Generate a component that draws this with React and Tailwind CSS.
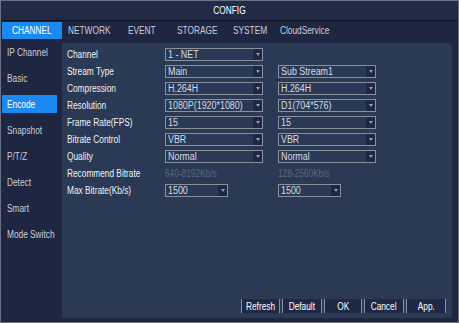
import React from 'react';

const tabs = [
  ['CHANNEL', 'ml-px w-[60px] justify-center bg-[#1a8af2] text-white'],
  ['NETWORK', 'ml-[6px] w-[60px]'],
  ['EVENT', 'w-[49px]'],
  ['STORAGE', 'w-[56px]'],
  ['SYSTEM', 'w-[47px]'],
  ['CloudService', 'w-[70px]'],
];
const menu = ['IP Channel', 'Basic', 'Encode', 'Snapshot', 'P/T/Z', 'Detect', 'Smart', 'Mode Switch'];

const rows = [
  { label: 'Channel', a: '1 - NET' },
  { label: 'Stream Type', a: 'Main', b: 'Sub Stream1' },
  { label: 'Compression', a: 'H.264H', b: 'H.264H' },
  { label: 'Resolution', a: '1080P(1920*1080)', b: 'D1(704*576)' },
  { label: 'Frame Rate(FPS)', a: '15', b: '15' },
  { label: 'Bitrate Control', a: 'VBR', b: 'VBR' },
  { label: 'Quality', a: 'Normal', b: 'Normal' },
];

// the device UI uses a narrow face; squeeze Liberation Sans to match
function Narrow({ children, center }) {
  return (
    <span
      className={`inline-block whitespace-nowrap scale-x-[0.83] ${center ? 'origin-center' : 'origin-left'}`}
    >
      {children}
    </span>
  );
}

function Select({ value, narrow }) {
  return (
    <div
      className={`flex h-[13px] items-stretch border border-[#8b919c] bg-[#2a3a56] ${
        narrow ? 'w-[63px]' : 'w-[98px]'
      }`}
    >
      <span className="flex-1 overflow-hidden whitespace-nowrap pl-[2px] text-[10px] leading-[11px] text-[#d6dae2]">
        <span className="inline-block origin-left scale-x-[0.89]">{value}</span>
      </span>
      <span className="flex w-[9px] items-center justify-center bg-[#1e2844]">
        <span className="h-0 w-0 border-x-[2px] border-t-[3px] border-x-transparent border-t-[#8fa0bd]" />
      </span>
    </div>
  );
}

export default function App() {
  return (
    <div
      className="flex h-[323px] w-[459px] flex-col border border-[#6b7184] bg-[#1f2642] text-[#dfe3ea]"
      style={{ fontFamily: '"Liberation Sans", Arial, sans-serif' }}
    >
      <div className="flex h-[19px] items-center justify-center bg-[#212a47] text-[10px] text-white">
        <Narrow center>CONFIG</Narrow>
      </div>
      <div className="h-px bg-[#0e121e]" />
      <div className="flex h-[22px] items-start pt-px">
        {tabs.map(([t, cls], i) => (
          <div key={t} className={`flex h-[17px] items-center text-[10px] ${i ? 'text-[#c9ced8]' : ''} ${cls}`}>
            <Narrow center={i === 0}>{t}</Narrow>
          </div>
        ))}
      </div>
      <div className="flex flex-1">
        <div className="flex w-[61px] flex-col gap-[8px] pl-px">
          {menu.map((m) => (
            <div
              key={m}
              className={`flex h-[18px] items-center pl-[5px] text-[10px] ${
                m === 'Encode' ? 'w-[55px] bg-[#1a8af2] text-white' : 'text-[#c9ced8]'
              }`}
            >
              <Narrow>{m}</Narrow>
            </div>
          ))}
        </div>
        <div className="mb-[4px] mr-[6px] flex flex-1 flex-col rounded-tr-[4px] bg-[#2a3a55] pl-[5px] pt-[5px]">
          {rows.map((r) => (
            <div key={r.label} className="flex h-[17px] items-start">
              <div className="w-[98px] text-[10px] leading-[13px] text-[#eef1f6]">
                <Narrow>{r.label}</Narrow>
              </div>
              <Select value={r.a} />
              {r.b && (
                <div className="ml-[15px]">
                  <Select value={r.b} />
                </div>
              )}
            </div>
          ))}
          <div className="flex h-[17px] items-start text-[10px] leading-[13px]">
            <div className="w-[98px] text-[#eef1f6]">
              <Narrow>Recommend Bitrate</Narrow>
            </div>
            <div className="w-[113px] text-[#58677e]">
              <Narrow>640-8192Kb/s</Narrow>
            </div>
            <div className="text-[#58677e]">
              <Narrow>128-2560Kb/s</Narrow>
            </div>
          </div>
          <div className="flex h-[17px] items-start">
            <div className="w-[98px] text-[10px] leading-[13px] text-[#eef1f6]">
              <Narrow>Max Bitrate(Kb/s)</Narrow>
            </div>
            <Select value="1500" narrow />
            <div className="ml-[50px]">
              <Select value="1500" narrow />
            </div>
          </div>
          <div className="flex-1" />
          <div className="mb-[5px] mr-[6px] flex justify-end gap-[2px]">
            {[
              ['Refresh', 'w-[39px]'],
              ['Default', 'w-[40px]'],
              ['OK', 'w-[38px]'],
              ['Cancel', 'w-[40px]'],
              ['App.', 'w-[40px]'],
            ].map(([b, w]) => (
              <div
                key={b}
                className={`flex h-[14px] items-center justify-center border-x border-[#8a919d] bg-[#1f2844] text-[10px] text-white ${w}`}
              >
                <Narrow center>{b}</Narrow>
              </div>
            ))}
          </div>
        </div>
      </div>
    </div>
  );
}
